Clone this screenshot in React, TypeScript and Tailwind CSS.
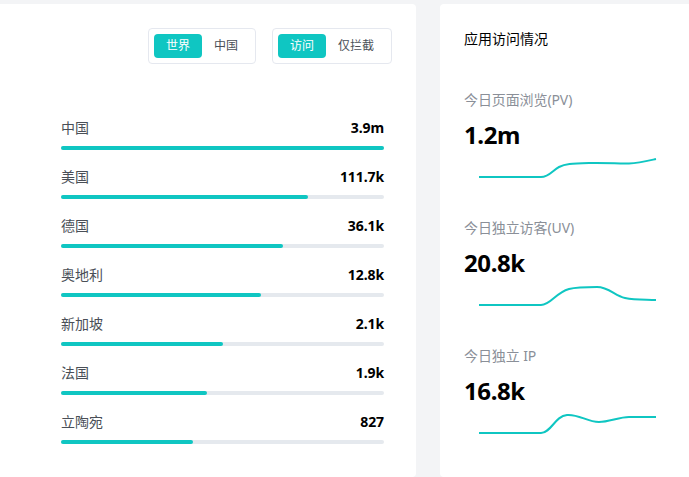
const font = "font-['Noto_Sans','Noto_Sans_CJK_SC',sans-serif]";

const rows: [string, string, string][] = [
  ["中国", "3.9m", "w-full"],
  ["美国", "111.7k", "w-[247px]"],
  ["德国", "36.1k", "w-[222px]"],
  ["奥地利", "12.8k", "w-[200px]"],
  ["新加坡", "2.1k", "w-[162px]"],
  ["法国", "1.9k", "w-[146px]"],
  ["立陶宛", "827", "w-[132px]"],
];

const stats: [string, string, string][] = [
  ["今日页面浏览(PV)", "1.2m", "M0 27 L62 27 C70 27 74 20 80 17 C86 14 92 13.5 110 13 C130 12.5 140 14 150 13.5 C160 13 168 11 177 9"],
  ["今日独立访客(UV)", "20.8k", "M0 27 L62 27 C72 27 76 15 90 11 C98 9 110 9 118 9 C130 9 136 18 146 20 C156 22 165 21.5 177 22"],
  ["今日独立 IP", "16.8k", "M0 27 L62 27 C72 27 76 10 88 9 C100 8 108 16 120 16 C130 16 140 11 150 11 L177 11"],
];

function Segment({ active, other }: { active: string; other: string }) {
  return (
    <div className="flex h-9 items-center rounded border border-[#e5e8ef] bg-white p-[5px] text-xs">
      <div className="flex h-6 items-center rounded bg-[#0fc6c2] px-3 text-white">{active}</div>
      <div className="flex h-6 items-center px-3 text-[#4a4f57]">{other}</div>
    </div>
  );
}

export default function App() {
  return (
    <div className={`${font} flex h-[477px] gap-6 overflow-hidden bg-[#f3f4f6] pt-1`}>
      <div className="w-[416px] shrink-0 rounded-r bg-white pr-8 pl-[61px]">
        <div className="-mr-2 flex justify-end gap-4 pt-6">
          <Segment active="世界" other="中国" />
          <Segment active="访问" other="仅拦截" />
        </div>
        <div className="mt-[53px] flex flex-col gap-4">
          {rows.map(([name, value, width]) => (
            <div key={name} className="flex flex-col gap-[7px]">
              <div className="flex h-[22px] items-center justify-between text-sm">
                <span className="text-[#4a4f57]">{name}</span>
                <span className="font-bold tracking-[-0.1px] text-black">{value}</span>
              </div>
              <div className="h-1 rounded-full bg-[#e5e9ee]">
                <div className={`h-1 rounded-full bg-[#0fc6c2] ${width}`} />
              </div>
            </div>
          ))}
        </div>
      </div>
      <div className="flex-1 rounded-l bg-white pt-6 pl-6">
        <div className="flex h-[22px] items-center text-sm text-black">应用访问情况</div>
        <div className="mt-[39px] flex flex-col gap-[29px]">
          {stats.map(([label, value, d]) => (
            <div key={label} className="flex flex-col">
              <div className="flex h-[22px] items-center text-sm tracking-[-0.1px] text-[#8a8f98]">{label}</div>
              <div className="mt-[6px] flex h-9 items-center text-2xl font-bold tracking-[-0.4px] text-black">{value}</div>
              <svg className="mt-[-3px] ml-[15px]" width="178" height="38" viewBox="0 0 178 38" fill="none">
                <path d={d} stroke="#0fc6c2" strokeWidth="2" />
              </svg>
            </div>
          ))}
        </div>
      </div>
    </div>
  );
}
